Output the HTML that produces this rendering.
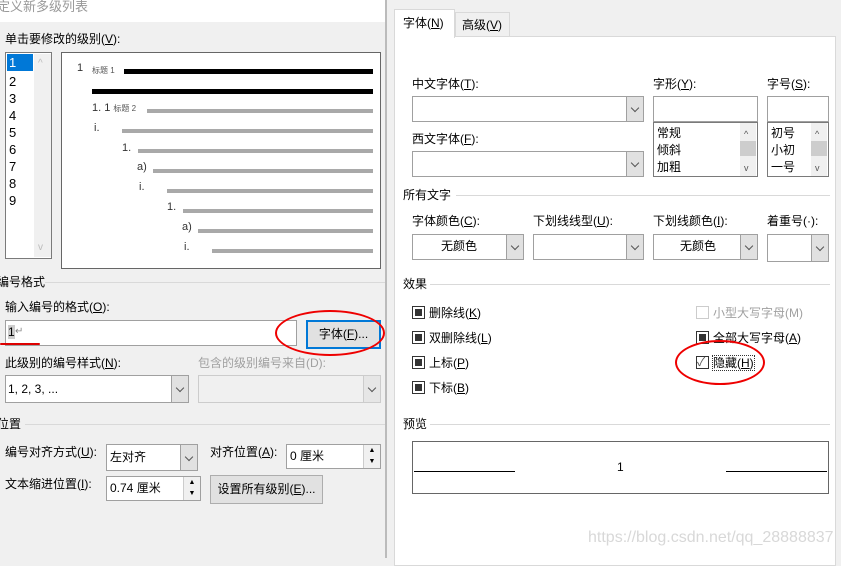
<!DOCTYPE html>
<html><head><meta charset="utf-8"><style>
*{box-sizing:border-box;margin:0;padding:0}
body{width:841px;height:558px;overflow:hidden;background:#f0f0f0;position:relative;font-family:"Liberation Sans","Noto Sans CJK SC",sans-serif;font-size:12px;color:#000}
.a{position:absolute;white-space:nowrap;line-height:14px}
.box{position:absolute;background:#fff;border:1px solid #7a7a7a}
.sel{position:absolute;background:#fff;border:1px solid #a0a0a0}
.sel .dd{position:absolute;right:0;top:0;bottom:0;width:17px;background:#e1e1e1;border-left:1px solid #a0a0a0}
.dd:after{content:"";position:absolute;left:5px;top:50%;margin-top:-4px;width:5px;height:5px;border-right:1px solid #555;border-bottom:1px solid #555;transform:rotate(45deg)}
.bar{position:absolute;background:#a9a9a9;height:4px}
.blk{position:absolute;background:#000;height:5px}
.hl{position:absolute;height:1px;background:#d9d9d9}
.cb{position:absolute;width:13px;height:13px;border:1px solid #333;background:#fff}
.cb.f:after{content:"";position:absolute;left:2px;top:2px;width:7px;height:7px;background:#333}
.btn{position:absolute;background:#e1e1e1;border:1px solid #adadad;text-align:center}
.dis{color:#a0a0a0}
</style></head><body>
<div style="position:absolute;left:0;top:0;width:386px;height:22px;background:#fff"></div>
<div class="a" style="left:-3px;top:0;font-size:13px;color:#999">定义新多级列表</div>
<div class="a" style="left:5px;top:32px">单击要修改的级别(<u>V</u>):</div>
<div class="box" style="left:5px;top:52px;width:47px;height:207px"></div>
<div style="position:absolute;left:7px;top:54px;width:26px;height:17px;background:#0078d7"></div>
<div style="position:absolute;left:34px;top:54px;width:17px;height:203px;background:#f0f0f0"></div>
<div class="a" style="left:38px;top:57px;color:#bbb;font-size:10px">^</div>
<div class="a" style="left:38px;top:241px;color:#bbb;font-size:10px">v</div>
<div class="a" style="left:9px;top:56px;color:#fff;font-size:13px">1</div>
<div class="a" style="left:9px;top:73px;font-size:13px;line-height:17px">2<br>3<br>4<br>5<br>6<br>7<br>8<br>9</div>
<div class="box" style="left:61px;top:52px;width:320px;height:217px;border-color:#666"></div>
<div class="blk" style="left:124px;top:69px;width:249px"></div>
<div class="blk" style="left:92px;top:89px;width:281px"></div>
<div class="bar" style="left:147px;top:109px;width:226px"></div>
<div class="bar" style="left:122px;top:129px;width:251px"></div>
<div class="bar" style="left:138px;top:149px;width:235px"></div>
<div class="bar" style="left:153px;top:169px;width:220px"></div>
<div class="bar" style="left:167px;top:189px;width:206px"></div>
<div class="bar" style="left:183px;top:209px;width:190px"></div>
<div class="bar" style="left:198px;top:229px;width:175px"></div>
<div class="bar" style="left:212px;top:249px;width:161px"></div>
<div class="a" style="left:77px;top:61px;font-size:11px;color:#333">1</div>
<div class="a" style="left:92px;top:64px;font-size:8px;color:#555">标题 1</div>
<div class="a" style="left:92px;top:101px;font-size:11px;color:#333">1. 1 <span style="font-size:8px;color:#555">标题 2</span></div>
<div class="a" style="left:94px;top:121px;font-size:11px;color:#333">i.</div>
<div class="a" style="left:122px;top:141px;font-size:11px;color:#333">1.</div>
<div class="a" style="left:137px;top:160px;font-size:11px;color:#333">a)</div>
<div class="a" style="left:139px;top:180px;font-size:11px;color:#333">i.</div>
<div class="a" style="left:167px;top:200px;font-size:11px;color:#333">1.</div>
<div class="a" style="left:182px;top:220px;font-size:11px;color:#333">a)</div>
<div class="a" style="left:184px;top:240px;font-size:11px;color:#333">i.</div>
<div class="a" style="left:-3px;top:275px">编号格式</div>
<div class="hl" style="left:45px;top:282px;width:340px"></div>
<div class="a" style="left:5px;top:300px">输入编号的格式(<u>O</u>):</div>
<div class="box" style="left:5px;top:320px;width:292px;height:26px;border-color:#a0a0a0"></div>
<div class="a" style="left:8px;top:325px;background:#ccc">1</div><div class="a" style="left:15px;top:325px;color:#888;font-size:10px">↵</div>
<div style="position:absolute;left:0;top:343px;width:40px;height:2px;background:#d00;border-radius:2px"></div>
<div class="btn" style="left:306px;top:320px;width:75px;height:29px;border:2px solid #0078d7;line-height:25px">字体(<u>F</u>)...</div>
<div style="position:absolute;left:275px;top:310px;width:110px;height:46px;border:2px solid #e00;border-radius:50%"></div>
<div class="a" style="left:5px;top:356px">此级别的编号样式(<u>N</u>):</div>
<div class="a dis" style="left:198px;top:356px">包含的级别编号来自(D):</div>
<div class="sel" style="left:5px;top:375px;width:184px;height:28px"><div class="dd"></div></div>
<div class="a" style="left:8px;top:382px">1, 2, 3, ...</div>
<div class="sel" style="left:198px;top:375px;width:183px;height:28px;background:#f0f0f0;border-color:#ccc"><div class="dd" style="background:#e6e6e6;border-color:#ccc"></div></div>
<div class="a" style="left:-3px;top:417px">位置</div>
<div class="hl" style="left:25px;top:424px;width:360px"></div>
<div class="a" style="left:5px;top:445px">编号对齐方式(<u>U</u>):</div>
<div class="sel" style="left:106px;top:444px;width:92px;height:27px"><div class="dd"></div></div>
<div class="a" style="left:110px;top:450px">左对齐</div>
<div class="a" style="left:210px;top:445px">对齐位置(<u>A</u>):</div>
<div class="sel" style="left:286px;top:444px;width:95px;height:25px"></div>
<div class="a" style="left:290px;top:449px">0 厘米</div>
<div style="position:absolute;left:363px;top:445px;width:17px;height:23px;background:#f0f0f0;border-left:1px solid #ccc;font-size:7px;text-align:center;line-height:11px">▲<br>▼</div>
<div class="a" style="left:5px;top:477px">文本缩进位置(<u>I</u>):</div>
<div class="sel" style="left:106px;top:476px;width:95px;height:25px"></div>
<div class="a" style="left:110px;top:481px">0.74 厘米</div>
<div style="position:absolute;left:183px;top:477px;width:17px;height:23px;background:#f0f0f0;border-left:1px solid #ccc;font-size:7px;text-align:center;line-height:11px">▲<br>▼</div>
<div class="btn" style="left:210px;top:475px;width:113px;height:29px;line-height:27px">设置所有级别(<u>E</u>)...</div>

<div style="position:absolute;left:385px;top:0;width:2px;height:558px;background:#bbb"></div>
<div style="position:absolute;left:387px;top:0;width:454px;height:558px;background:#f0f0f0"></div>
<div style="position:absolute;left:394px;top:36px;width:442px;height:530px;background:#fff;border:1px solid #d9d9d9"></div>
<div style="position:absolute;left:394px;top:9px;width:61px;height:29px;background:#fff;border:1px solid #d9d9d9;border-bottom:none"></div>
<div class="a" style="left:403px;top:16px">字体(<u>N</u>)</div>
<div style="position:absolute;left:455px;top:12px;width:55px;height:24px;background:#f0f0f0;border:1px solid #d9d9d9;border-bottom:none"></div>
<div class="a" style="left:462px;top:18px">高级(<u>V</u>)</div>
<div class="a" style="left:412px;top:77px">中文字体(<u>T</u>):</div>
<div class="sel" style="left:412px;top:96px;width:232px;height:26px"><div class="dd"></div></div>
<div class="a" style="left:653px;top:77px">字形(<u>Y</u>):</div>
<div class="sel" style="left:653px;top:96px;width:105px;height:26px"></div>
<div class="sel" style="left:653px;top:122px;width:105px;height:55px;border-color:#7a7a7a"></div>
<div style="position:absolute;left:740px;top:123px;width:16px;height:53px;background:#f0f0f0"></div>
<div style="position:absolute;left:740px;top:141px;width:16px;height:15px;background:#cdcdcd"></div>
<div class="a" style="left:657px;top:125px;line-height:17px">常规<br>倾斜<br>加粗</div>
<div class="a" style="left:744px;top:126px;font-size:9px;color:#555;line-height:17px">^<br><br>v</div>
<div class="a" style="left:767px;top:77px">字号(<u>S</u>):</div>
<div class="sel" style="left:767px;top:96px;width:62px;height:26px"></div>
<div class="sel" style="left:767px;top:122px;width:62px;height:55px;border-color:#7a7a7a"></div>
<div style="position:absolute;left:811px;top:123px;width:16px;height:53px;background:#f0f0f0"></div>
<div style="position:absolute;left:811px;top:141px;width:16px;height:15px;background:#cdcdcd"></div>
<div class="a" style="left:771px;top:125px;line-height:17px">初号<br>小初<br>一号</div>
<div class="a" style="left:815px;top:126px;font-size:9px;color:#555;line-height:17px">^<br><br>v</div>
<div class="a" style="left:412px;top:132px">西文字体(<u>F</u>):</div>
<div class="sel" style="left:412px;top:151px;width:232px;height:26px"><div class="dd"></div></div>
<div class="a" style="left:403px;top:188px">所有文字</div>
<div class="hl" style="left:456px;top:195px;width:374px"></div>
<div class="a" style="left:412px;top:214px">字体颜色(<u>C</u>):</div>
<div class="sel" style="left:412px;top:234px;width:112px;height:26px"><div class="dd"></div></div>
<div class="a" style="left:441px;top:239px">无颜色</div>
<div class="a" style="left:533px;top:214px">下划线线型(<u>U</u>):</div>
<div class="sel" style="left:533px;top:234px;width:111px;height:26px"><div class="dd"></div></div>
<div class="a" style="left:653px;top:214px">下划线颜色(<u>I</u>):</div>
<div class="sel" style="left:653px;top:234px;width:105px;height:26px"><div class="dd"></div></div>
<div class="a" style="left:680px;top:239px">无颜色</div>
<div class="a" style="left:767px;top:214px">着重号(·):</div>
<div class="sel" style="left:767px;top:234px;width:62px;height:28px"><div class="dd"></div></div>
<div class="a" style="left:403px;top:277px">效果</div>
<div class="hl" style="left:430px;top:284px;width:400px"></div>
<div class="cb f" style="left:412px;top:306px"></div><div class="a" style="left:429px;top:306px">删除线(<u>K</u>)</div>
<div class="cb f" style="left:412px;top:331px"></div><div class="a" style="left:429px;top:331px">双删除线(<u>L</u>)</div>
<div class="cb f" style="left:412px;top:356px"></div><div class="a" style="left:429px;top:356px">上标(<u>P</u>)</div>
<div class="cb f" style="left:412px;top:381px"></div><div class="a" style="left:429px;top:381px">下标(<u>B</u>)</div>
<div class="cb" style="left:696px;top:306px;border-color:#ccc"></div><div class="a dis" style="left:713px;top:306px">小型大写字母(M)</div>
<div class="cb f" style="left:696px;top:331px"></div><div class="a" style="left:713px;top:331px">全部大写字母(<u>A</u>)</div>
<div class="cb" style="left:696px;top:356px"></div><div class="a" style="left:697px;top:355px;color:#555">✓</div>
<div class="a" style="left:713px;top:356px;outline:1px dotted #333">隐藏(<u>H</u>)</div>
<div style="position:absolute;left:675px;top:340px;width:90px;height:45px;border:2px solid #e00;border-radius:50%"></div>
<div class="a" style="left:403px;top:417px">预览</div>
<div class="hl" style="left:430px;top:424px;width:400px"></div>
<div class="box" style="left:412px;top:441px;width:417px;height:53px;border-color:#666"></div>
<div style="position:absolute;left:414px;top:471px;width:101px;height:1px;background:#000"></div>
<div style="position:absolute;left:726px;top:471px;width:101px;height:1px;background:#000"></div>
<div class="a" style="left:617px;top:460px;font-size:12px">1</div>
<div class="a" style="left:588px;top:529px;font-size:16px;color:#d8d8d8;line-height:18px">https://blog.csdn.net/qq_28888837</div>
</body></html>
